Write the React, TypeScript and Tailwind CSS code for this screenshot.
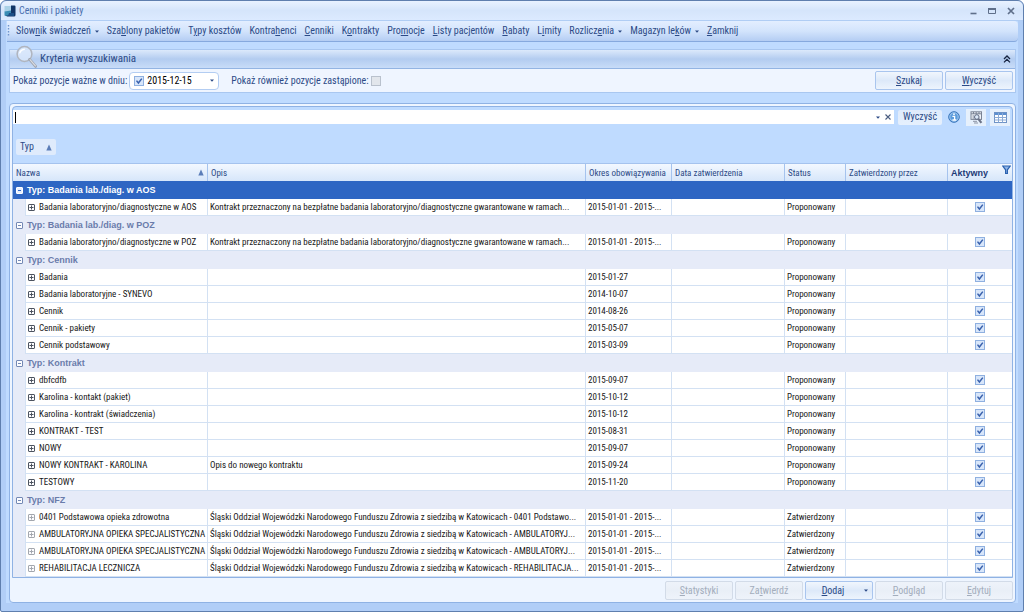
import React from "react";

type Item = { name: string; desc?: string; period: string; status: string; muted?: boolean };
type Group = { title: string; items: Item[] };

const P = "Proponowany";
const Z = "Zatwierdzony";
const NFZ = "Śląski Oddział Wojewódzki Narodowego Funduszu Zdrowia z siedzibą w Katowicach - ";
const LAB =
  "Kontrakt przeznaczony na bezpłatne badania laboratoryjno/diagnostyczne gwarantowane w ramach...";

const groups: Group[] = [
  {
    title: "Typ: Badania lab./diag. w AOS",
    items: [{ name: "Badania laboratoryjno/diagnostyczne w AOS", desc: LAB, period: "2015-01-01 - 2015-...", status: P }],
  },
  {
    title: "Typ: Badania lab./diag. w POZ",
    items: [{ name: "Badania laboratoryjno/diagnostyczne w POZ", desc: LAB, period: "2015-01-01 - 2015-...", status: P }],
  },
  {
    title: "Typ: Cennik",
    items: [
      { name: "Badania", period: "2015-01-27", status: P },
      { name: "Badania laboratoryjne - SYNEVO", period: "2014-10-07", status: P },
      { name: "Cennik", period: "2014-08-26", status: P },
      { name: "Cennik - pakiety", period: "2015-05-07", status: P },
      { name: "Cennik podstawowy", period: "2015-03-09", status: P },
    ],
  },
  {
    title: "Typ: Kontrakt",
    items: [
      { name: "dbfcdfb", period: "2015-09-07", status: P },
      { name: "Karolina - kontakt (pakiet)", period: "2015-10-12", status: P },
      { name: "Karolina - kontrakt (świadczenia)", period: "2015-10-12", status: P },
      { name: "KONTRAKT - TEST", period: "2015-08-31", status: P },
      { name: "NOWY", period: "2015-09-07", status: P },
      { name: "NOWY KONTRAKT - KAROLINA", desc: "Opis do nowego kontraktu", period: "2015-09-24", status: P },
      { name: "TESTOWY", period: "2015-11-20", status: P },
    ],
  },
  {
    title: "Typ: NFZ",
    items: [
      { name: "0401 Podstawowa opieka zdrowotna", desc: NFZ + "0401 Podstawo...", period: "2015-01-01 - 2015-...", status: Z, muted: true },
      { name: "AMBULATORYJNA OPIEKA SPECJALISTYCZNA", desc: NFZ + "AMBULATORYJ...", period: "2015-01-01 - 2015-...", status: Z, muted: true },
      { name: "AMBULATORYJNA OPIEKA SPECJALISTYCZNA", desc: NFZ + "AMBULATORYJ...", period: "2015-01-01 - 2015-...", status: Z, muted: true },
      { name: "REHABILITACJA LECZNICZA", desc: NFZ + "REHABILITACJA...", period: "2015-01-01 - 2015-...", status: Z, muted: true },
    ],
  },
];

/* A menu label: before, underlined access key, after. */
type Label = [string, string, string];
const menu: { label: Label; drop?: boolean }[] = [
  { label: ["Słow", "n", "ik świadczeń"], drop: true },
  { label: ["Sza", "b", "lony pakietów"] },
  { label: ["T", "y", "py kosztów"] },
  { label: ["Kontra", "h", "enci"] },
  { label: ["", "C", "enniki"] },
  { label: ["K", "o", "ntrakty"] },
  { label: ["Pro", "m", "ocje"] },
  { label: ["", "L", "isty pacjentów"] },
  { label: ["", "R", "abaty"] },
  { label: ["L", "i", "mity"] },
  { label: ["Rozlicz", "e", "nia"], drop: true },
  { label: ["Magazyn le", "k", "ów"], drop: true },
  { label: ["", "Z", "amknij"] },
];

function Keyed({ label }: { label: Label }) {
  return (
    <span>
      {label[0]}
      <span className="underline underline-offset-1">{label[1]}</span>
      {label[2]}
    </span>
  );
}

function Caret() {
  return (
    <svg width="4" height="3" viewBox="0 0 4 3" className="shrink-0" aria-hidden="true">
      <path d="M0 0.5h4L2 2.8z" fill="currentColor" />
    </svg>
  );
}

function SortMark() {
  return (
    <svg width="6" height="7" viewBox="0 0 6 7" className="shrink-0" aria-hidden="true">
      <path d="M3 0.5L5.7 6.5H0.3z" fill="#5b7db8" />
    </svg>
  );
}

function Tick({ label, checked = true, disabled = false }: { label: string; checked?: boolean; disabled?: boolean }) {
  return (
    <span className="relative flex size-[10px] shrink-0">
      <input
        type="checkbox"
        aria-label={label}
        defaultChecked={checked}
        disabled={disabled}
        className="peer size-full appearance-none border border-[#8fb0e0] bg-[#d8e6fa] disabled:border-[#b9c1cd] disabled:bg-[#e2e6ec]"
      />
      <svg viewBox="0 0 10 10" className="pointer-events-none absolute inset-0 hidden size-full peer-checked:block" aria-hidden="true">
        <path d="M2.5 4.6L4.4 7L7.8 2.6" fill="none" stroke="#3a62ad" strokeWidth="1.5" />
      </svg>
    </span>
  );
}

function Expander({ open, light, muted }: { open?: boolean; light?: boolean; muted?: boolean }) {
  const c = light ? "#ffffff" : open ? "#7489b5" : muted ? "#a3a7ae" : "#4d5460";
  return (
    <svg width="7" height="7" viewBox="0 0 7 7" className="block shrink-0" aria-hidden="true">
      <rect x="0.5" y="0.5" width="6" height="6" rx="0.5" fill={light ? "#e8f0ff" : "#fdfdff"} stroke={c} />
      <path d={open ? "M2 3.5h3" : "M1.5 3.5h4M3.5 1.5v4"} stroke={light ? "#2e66c3" : c} />
    </svg>
  );
}

function Logo() {
  return (
    <svg width="12" height="12" viewBox="0 0 12 12" aria-hidden="true">
      <path d="M0.5 1H7V7H0.5z" fill="#a9d0e6" />
      <path d="M0.5 6.5L7 5.5V11H1.5Q0.5 11 0.5 10z" fill="#3a8db5" />
      <path d="M7 0.5H10.5Q11.5 0.5 11.5 1.5V10Q11.5 11.5 10 11.5H3L2 10.5H7z" fill="#123566" />
      <path d="M5 8h5v3H4z" fill="#1b4f86" />
    </svg>
  );
}

function Magnifier() {
  return (
    <svg width="24" height="24" viewBox="0 0 24 24" className="absolute top-[-5px] left-[5px]" aria-hidden="true">
      <circle cx="9.5" cy="9" r="7.4" fill="#d9e8fb" fillOpacity="0.85" stroke="#b0b5bf" strokeWidth="1.5" />
      <path d="M4.6 8.4Q5.6 4.4 9.8 4.2" fill="none" stroke="#fff" strokeWidth="1.4" />
      <path d="M14.6 14.4L20.6 21.4" stroke="#a0a5b0" strokeWidth="2.8" strokeLinecap="round" />
      <path d="M15 14.6L20.4 20.8" stroke="#d9dce2" strokeWidth="1.2" strokeLinecap="round" />
    </svg>
  );
}

function InfoIcon() {
  return (
    <svg width="12" height="12" viewBox="0 0 12 12" aria-hidden="true">
      <circle cx="6" cy="6" r="5.3" fill="#5b9bdc" stroke="#3a74b8" />
      <circle cx="6" cy="6" r="4.2" fill="none" stroke="#b4d4f5" strokeWidth="0.8" />
      <path d="M4.4 5.3H6.6V9M4.4 9H8.2" stroke="#fff" strokeWidth="1.3" fill="none" />
      <circle cx="6" cy="3.2" r="0.9" fill="#fff" />
    </svg>
  );
}

function PreviewIcon() {
  return (
    <svg width="13" height="13" viewBox="0 0 13 13" aria-hidden="true">
      <rect x="1" y="0.8" width="10.5" height="7.6" fill="#eef2f8" stroke="#7a8394" />
      <path d="M1 2.8h10.5M3.5 1v2M6.2 1v2M9 1v2M2.5 5h1.5M2.5 7h2" stroke="#7a8394" />
      <circle cx="6.8" cy="6" r="2.3" fill="#dce9f8" stroke="#5c6780" />
      <path d="M3 10.3h4M4 12h4" stroke="#8b93a3" />
      <path d="M8.4 7.8L11.4 11.8" stroke="#6c7488" strokeWidth="2.2" />
    </svg>
  );
}

function GridIcon() {
  return (
    <svg width="13" height="11" viewBox="0 0 13 11" aria-hidden="true">
      <rect x="0.5" y="0.5" width="12" height="10" fill="#fff" stroke="#6f93c6" />
      <path d="M1 1h11v2H1z" fill="#5c8fd0" />
      <path d="M0.5 5.5h12M0.5 8h12M4.5 1v9.5M8.5 1v9.5" stroke="#8cabd6" />
    </svg>
  );
}

function ActionButton({ label, disabled, drop }: { label: Label; disabled?: boolean; drop?: boolean }) {
  return (
    <button
      type="button"
      disabled={disabled}
      className="relative flex h-[19px] w-[68px] items-center justify-center rounded-xs border border-[#a9c5ee] bg-linear-to-b from-[#f1f6fd] via-[#dde9f9] to-[#edf4fd] text-[#2c4a86] disabled:border-[#d2dbe8] disabled:from-[#eef3fa] disabled:via-[#e9eff7] disabled:to-[#eef3fa] disabled:text-[#a3adbc]"
    >
      <span className={drop ? "pr-3" : ""}>
        <Keyed label={label} />
      </span>
      {drop && (
        <span className="absolute right-1">
          <Caret />
        </span>
      )}
    </button>
  );
}

const th =
  "h-[17px] border-r border-[#a5c3ee] px-[3px] text-left font-normal whitespace-nowrap last:border-r-0";
const td = "h-[17px] overflow-hidden border-r border-b border-[#d3e1f3] px-[2px] text-ellipsis whitespace-nowrap last:border-r-0";

function PriceTable() {
  return (
    <table className="w-full table-fixed border-separate border-spacing-0 text-[9px] leading-4 text-[#161616]">
      <colgroup>
        <col className="w-[13px]" />
        <col className="w-[182px]" />
        <col />
        <col className="w-[86px]" />
        <col className="w-[113px]" />
        <col className="w-[61px]" />
        <col className="w-[102px]" />
        <col className="w-[64px]" />
      </colgroup>
      <thead className="bg-linear-to-b from-[#f3f8ff] to-[#d6e6fa] text-[#2c4a86]">
        <tr>
          <th colSpan={2} className={th}>
            <span className="flex items-center justify-between">
              Nazwa <SortMark />
            </span>
          </th>
          <th className={th}>Opis</th>
          <th className={th}>Okres obowiązywania</th>
          <th className={th}>Data zatwierdzenia</th>
          <th className={th}>Status</th>
          <th className={th}>Zatwierdzony przez</th>
          <th className={th}>
            <span className="flex justify-between">
              <b className="font-['Liberation_Sans',sans-serif] text-[#1c3a78]">Aktywny</b>
              <svg width="9" height="10" viewBox="0 0 9 10" className="-mr-[2px] shrink-0" aria-hidden="true">
                <path d="M0.8 1h7.4L5.4 4.8V8.5H3.6V4.8z" fill="#8fb4e6" stroke="#2b62b0" strokeWidth="1.2" />
              </svg>
            </span>
          </th>
        </tr>
      </thead>
      {groups.map((g, gi) => (
        <tbody key={g.title}>
          <tr className={gi === 0 ? "bg-[#2e66c3] text-white" : "bg-[#e6ebf8] text-[#6a7cab]"}>
            <th colSpan={8} className="h-[18px] px-[3px] text-left font-['Liberation_Sans',sans-serif] font-bold">
              <span className="flex items-center gap-1">
                <Expander open light={gi === 0} />
                {g.title}
              </span>
            </th>
          </tr>
          {g.items.map((r, i) => (
            <tr key={i} className="bg-white">
              <td className="border-r border-[#d3e1f3] bg-[#e6ebf8]" />
              <td className={td}>
                <span className="flex items-center gap-1">
                  <Expander muted={r.muted} />
                  {r.name}
                </span>
              </td>
              <td className={td}>{r.desc}</td>
              <td className={td}>{r.period}</td>
              <td className={td} />
              <td className={td}>{r.status}</td>
              <td className={td} />
              <td className={td}>
                <span className="flex justify-center">
                  <Tick label={"Aktywny: " + r.name} />
                </span>
              </td>
            </tr>
          ))}
        </tbody>
      ))}
    </table>
  );
}

export default function App() {
  return (
    <div className="flex min-h-screen flex-col rounded-t-md rounded-b-xs border border-[#5f7fae] bg-[#b1cef7] pb-2 font-['Roboto_Condensed','Roboto',sans-serif] text-[10px] leading-4 text-[#2c4a86]">
      <header className="flex h-5 items-center gap-[3px] rounded-t-md border-b border-[#b0cdf4] bg-linear-to-b from-[#e9f2ff] via-[#d5e5fb] to-[#dceaff] pr-2 pl-[3px]">
        <Logo />
        <h1 className="flex-1 text-[#4a6fae]">Cenniki i pakiety</h1>
        <div className="flex items-center gap-[11px] text-[#5f6f8a]">
          <button type="button" aria-label="Minimalizuj" className="flex">
            <svg width="7" height="8" viewBox="0 0 7 8" aria-hidden="true">
              <path d="M0.5 6.5h6" stroke="currentColor" strokeWidth="1.6" />
            </svg>
          </button>
          <button type="button" aria-label="Maksymalizuj" className="flex">
            <svg width="8" height="8" viewBox="0 0 8 8" aria-hidden="true">
              <path d="M0.5 2.5h7v4h-7z" fill="none" stroke="currentColor" />
              <path d="M0 2h8" stroke="currentColor" strokeWidth="2" />
            </svg>
          </button>
          <button type="button" aria-label="Zamknij okno" className="flex">
            <svg width="8" height="8" viewBox="0 0 8 8" aria-hidden="true">
              <path d="M1 1l6 6M7 1L1 7" stroke="currentColor" strokeWidth="1.7" />
            </svg>
          </button>
        </div>
      </header>

      <div className="mx-[5px] flex flex-1 flex-col bg-[#bfdbff]">
        <nav className="ml-px flex h-[21px] items-center rounded-r-sm border-b border-[#86a9de] bg-linear-to-b from-[#e3eeff] via-[#d3e4fc] to-[#b4cdf3]">
          <svg width="3" height="12" viewBox="0 0 3 12" className="mr-[6px]" aria-hidden="true">
            <path d="M1.5 0v12" stroke="#6f95cf" strokeWidth="1.4" strokeDasharray="1.5 1.5" />
          </svg>
          <div className="flex gap-2">
            {menu.map((m) => (
              <button key={m.label.join("")} type="button" className="flex items-center gap-1 whitespace-nowrap">
                <Keyed label={m.label} />
                {m.drop && <Caret />}
              </button>
            ))}
          </div>
        </nav>

        <main className="flex flex-1 flex-col gap-[10px] pt-[7px] pr-[2px] pl-[3px]">
          <section className="border border-[#a9c7f0] bg-[#eff5ff]">
            <div className="relative flex h-[19px] items-center justify-between border-b border-[#93b4e3] bg-linear-to-b from-[#dce9fb] via-[#b3ccf0] to-[#c8dcf8] pr-1 pl-[30px]">
              <Magnifier />
              <h2 className="text-[11px]">Kryteria wyszukiwania</h2>
              <button type="button" aria-label="Zwiń" className="flex">
                <svg width="8" height="8" viewBox="0 0 8 8" aria-hidden="true">
                  <path d="M1 4L4 1L7 4M1 7.4L4 4.4L7 7.4" fill="none" stroke="#16233f" strokeWidth="1.3" />
                </svg>
              </button>
            </div>
            <div className="flex h-[23px] items-center px-[3px]">
              <label htmlFor="valid-on">Pokaż pozycje ważne w dniu:</label>
              <div className="ml-[2px] flex h-[18px] w-[90px] items-center gap-[3px] rounded-sm border border-[#b3cdf2] bg-white px-1">
                <Tick label="Filtruj po dacie" />
                <input id="valid-on" defaultValue="2015-12-15" className="w-0 flex-1 bg-transparent text-black outline-none" />
                <button type="button" aria-label="Wybierz datę" className="flex">
                  <Caret />
                </button>
              </div>
              <span className="mr-[2px] ml-3">Pokaż również pozycje zastąpione:</span>
              <Tick label="Pokaż również pozycje zastąpione" checked={false} disabled />
              <div className="-mr-px ml-auto flex gap-[2px]">
                <ActionButton label={["", "S", "zukaj"]} />
                <ActionButton label={["", "W", "yczyść"]} />
              </div>
            </div>
          </section>

          <section className="flex flex-1 flex-col rounded-sm border border-[#8fb2e4] bg-[#eef5ff] p-[2px]">
            <div className="rounded-t-sm border border-[#8fb2e4] bg-[#bfdbff]">
              <div className="flex h-5 items-center gap-1 pr-[2px]">
                <div className="flex h-[14px] flex-1 items-center gap-1 bg-white px-[2px]">
                  <span className="h-[11px] w-px bg-black" />
                  <input type="text" aria-label="Szukaj w tabeli" className="h-full flex-1 bg-transparent outline-none" />
                  <button type="button" aria-label="Historia" className="flex">
                    <Caret />
                  </button>
                  <button type="button" aria-label="Usuń tekst" className="flex">
                    <svg width="8" height="8" viewBox="0 0 8 8" aria-hidden="true">
                      <path d="M1.5 1.5l5 5M6.5 1.5l-5 5" stroke="#4a5d80" strokeWidth="1.1" />
                    </svg>
                  </button>
                </div>
                <button type="button" className="flex h-[15px] w-11 items-center justify-center rounded-xs bg-linear-to-b from-[#dfebfc] to-[#e6f0fd]">
                  Wyczyść
                </button>
                <button type="button" aria-label="Informacje" className="mx-[2px] flex">
                  <InfoIcon />
                </button>
                <button type="button" aria-label="Podgląd wydruku" className="flex h-[17px] w-5 items-center justify-center bg-[#e6f0fc]">
                  <PreviewIcon />
                </button>
                <button type="button" aria-label="Kolumny" className="flex h-[17px] w-5 items-center justify-center bg-[#e6f0fc]">
                  <GridIcon />
                </button>
              </div>
              <div className="flex px-[3px] pt-3 pb-2">
                <button type="button" className="flex h-4 w-10 items-center justify-between rounded-xs bg-[#dfebfc] px-1">
                  Typ <SortMark />
                </button>
              </div>
              <div className="border-t border-[#a5c3ee]">
                <PriceTable />
              </div>
            </div>
            <footer className="flex flex-1 items-end justify-end gap-[2px]">
              <ActionButton label={["", "S", "tatystyki"]} disabled />
              <ActionButton label={["Za", "t", "wierdź"]} disabled />
              <ActionButton label={["", "D", "odaj"]} drop />
              <ActionButton label={["", "P", "odgląd"]} disabled />
              <ActionButton label={["", "E", "dytuj"]} disabled />
            </footer>
          </section>
        </main>
      </div>
    </div>
  );
}
